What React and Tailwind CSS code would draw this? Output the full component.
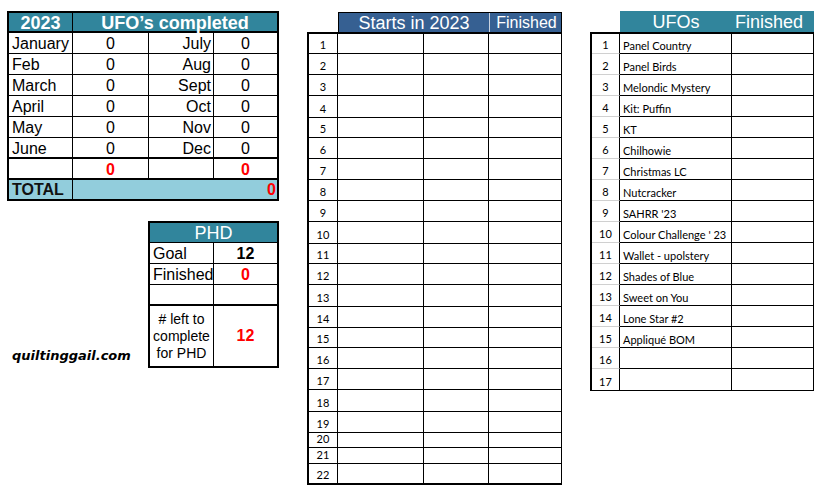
import React from "react";

const ARIAL = { fontFamily: '"Liberation Sans", Arial, sans-serif' };

function LeftTable() {
  const rows = [
    ["January", "0", "July", "0"],
    ["Feb", "0", "Aug", "0"],
    ["March", "0", "Sept", "0"],
    ["April", "0", "Oct", "0"],
    ["May", "0", "Nov", "0"],
    ["June", "0", "Dec", "0"],
  ];
  return (
    <div className="w-[272px] border-2 border-black text-[16px] text-black">
      <div className="grid grid-cols-[64px_204px] h-[20px] border-b-2 border-black bg-[#31859c] text-white font-bold text-[18px] leading-none">
        <div className="flex items-center justify-center pt-[1px] border-r border-black">2023</div>
        <div className="flex items-center justify-center pt-[1px]">UFO’s completed</div>
      </div>
      {rows.map((r, i) => (
        <div
          key={i}
          className={
            "grid grid-cols-[64px_76px_65px_63px] h-[21px] border-black leading-none " +
            (i === 5 ? "border-b-2" : "border-b")
          }
        >
          <div className="flex items-center pt-[2px] pl-[3px] border-r border-black">{r[0]}</div>
          <div className="flex items-center justify-center pt-[2px] border-r border-black">{r[1]}</div>
          <div className="flex items-center justify-end pt-[2px] pr-[2px] border-r border-black">{r[2]}</div>
          <div className="flex items-center justify-center pt-[2px]">{r[3]}</div>
        </div>
      ))}
      <div className="grid grid-cols-[64px_76px_65px_63px] h-[21px] border-b-2 border-black leading-none font-bold text-[#ff0000]">
        <div className="border-r border-black"></div>
        <div className="flex items-center justify-center pt-[2px] border-r border-black">0</div>
        <div className="border-r border-black"></div>
        <div className="flex items-center justify-center pt-[2px]">0</div>
      </div>
      <div className="grid grid-cols-[64px_204px] h-[19px] bg-[#92cddc] leading-none font-bold">
        <div className="flex items-center pt-[1px] pl-[3px] border-r border-black text-[#111]">TOTAL</div>
        <div className="flex items-center justify-end pt-[1px] pr-[1px] text-[#ff0000]">0</div>
      </div>
    </div>
  );
}

function PhdTable() {
  return (
    <div className="w-[131px] border-2 border-black text-[16px] text-black leading-none">
      <div className="h-[20px] flex items-center justify-center pt-[1px] bg-[#31859c] text-white text-[18px] border-b border-black">
        PHD
      </div>
      <div className="grid grid-cols-[64px_63px] h-[21px] border-b border-black">
        <div className="flex items-center pt-[1px] pl-[3px] border-r border-black">Goal</div>
        <div className="flex items-center justify-center pt-[1px] font-bold">12</div>
      </div>
      <div className="grid grid-cols-[64px_63px] h-[21px] border-b border-black">
        <div className="flex items-center pt-[1px] pl-[3px] border-r border-black">Finished</div>
        <div className="flex items-center justify-center pt-[1px] font-bold text-[#ff0000]">0</div>
      </div>
      <div className="grid grid-cols-[64px_63px] h-[21px] border-b-2 border-black">
        <div className="border-r border-black"></div>
        <div></div>
      </div>
      <div className="grid grid-cols-[64px_63px] h-[60px]">
        <div className="flex items-center justify-center text-center text-[14px] leading-[17px] border-r border-black">
          # left to
          <br />
          complete
          <br />
          for PHD
        </div>
        <div className="flex items-center justify-center font-bold text-[#ff0000]">12</div>
      </div>
    </div>
  );
}

const midHeights = [
  "h-[20px]", "h-[21px]", "h-[21px]", "h-[22px]", "h-[20px]", "h-[21px]",
  "h-[21px]", "h-[21px]", "h-[21px]", "h-[22px]", "h-[20px]", "h-[21px]",
  "h-[22px]", "h-[21px]", "h-[20px]", "h-[21px]", "h-[21px]", "h-[22px]",
  "h-[21px]", "h-[15px]", "h-[16px]", "h-[19px]",
];

function MiddleTable() {
  return (
    <div className="w-[255px] mt-[1px]">
      <div className="ml-[31px] w-[224px] h-[20px] grid grid-cols-[151px_73px] border-t border-l border-r border-black bg-[#366092] text-white leading-none">
        <div className="flex items-center justify-center pt-[1px] text-[18px] border-r border-[#c9d3e0]">Starts in 2023</div>
        <div className="flex items-center justify-center pt-[1px] text-[16px]">Finished</div>
      </div>
      <div className="w-[255px] border-l-2 border-t-2 border-b-2 border-r border-black">
        {midHeights.map((h, i) => (
          <div
            key={i}
            className={
              "grid grid-cols-[29px_86px_65px_72px] border-black " +
              h +
              (i < midHeights.length - 1 ? " border-b" : "")
            }
          >
            <div
              className="flex items-end justify-center pb-[3px] border-r border-black text-[11px] leading-[11px] text-black"
              style={{ fontFamily: "Lato, sans-serif" }}
            >
              {i + 1}
            </div>
            <div className="border-r border-black"></div>
            <div className="border-r border-black"></div>
            <div></div>
          </div>
        ))}
      </div>
    </div>
  );
}

const ufos = [
  "Panel Country",
  "Panel Birds",
  "Melondic Mystery",
  "Kit: Puffin",
  "KT",
  "Chilhowie",
  "Christmas LC",
  "Nutcracker",
  "SAHRR '23",
  "Colour Challenge ' 23",
  "Wallet - upolstery",
  "Shades of Blue",
  "Sweet on You",
  "Lone Star #2",
  "Appliqué BOM",
  "",
  "",
];

function RightTable() {
  return (
    <div className="w-[224px]">
      <div className="ml-[30px] w-[194px] h-[21px] grid grid-cols-[112px_82px] bg-[#31859c] text-white text-[18px] leading-none">
        <div className="flex items-center justify-center pt-[1px]">UFOs</div>
        <div className="flex items-center justify-center pt-[1px] pr-[8px]">Finished</div>
      </div>
      <div
        className="w-[224px] border-l-2 border-t-2 border-r border-b border-black text-[11px] leading-[13px] text-black"
        style={{ fontFamily: "Lato, sans-serif" }}
      >
        {ufos.map((u, i) => {
          const last = i === ufos.length - 1;
          return (
            <div
              key={i}
              className={"grid grid-cols-[28px_112px_81px] " + (i === 0 ? "h-[20px]" : "h-[21px]")}
            >
              <div
                className={
                  "flex items-end justify-center pb-[2px] border-r border-black " +
                  (last ? "" : "border-b border-b-[#d0d0d0]")
                }
              >
                {i + 1}
              </div>
              <div
                className={
                  "flex items-end pl-[3px] pb-[1px] border-r border-black whitespace-nowrap " +
                  (last ? "" : "border-b")
                }
              >
                {u}
              </div>
              <div className={last ? "" : "border-b border-black"}></div>
            </div>
          );
        })}
      </div>
    </div>
  );
}

export default function App() {
  return (
    <div className="w-[825px] h-[495px] bg-white overflow-hidden" style={ARIAL}>
      <div className="flex pt-[11px] pl-[7px] gap-[28px]">
        <div className="w-[272px] flex flex-col">
          <LeftTable />
          <div className="flex items-end justify-between mt-[20px]">
            <div
              className="pl-[5px] mb-[4px] text-[13px] leading-[16px] font-bold italic text-black"
              style={{ fontFamily: '"DejaVu Sans", Verdana, sans-serif' }}
            >
              quiltinggail.com
            </div>
            <PhdTable />
          </div>
        </div>
        <MiddleTable />
        <RightTable />
      </div>
    </div>
  );
}
